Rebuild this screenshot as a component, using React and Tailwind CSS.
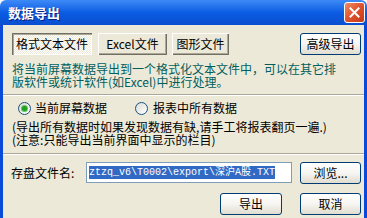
import React from "react";

const xpBtn =
  "flex items-center justify-center h-[22px] rounded-[3px] border border-[#003C74] bg-linear-to-b from-white via-[#F6F5F1] to-[#E0DDD0] text-[12px] text-black";

const classicUp =
  "flex items-center justify-center h-[22px] bg-[#ECE9D8] text-[12px] text-black shadow-[inset_1px_1px_#fff,inset_-1px_-1px_#716f64,inset_-2px_-2px_#aca899]";

const classicDown =
  "flex items-center justify-center h-[22px] bg-[repeating-conic-gradient(#fff_0_25%,#ECE9D8_0_50%)] bg-[length:2px_2px] text-[12px] text-black shadow-[inset_1px_1px_#716f64,inset_2px_2px_#aca899,inset_-1px_-1px_#fff]";

const Separator = ({ className }) => (
  <div className={className}>
    <div className="h-px bg-[#ACA899]" />
    <div className="h-px bg-white" />
  </div>
);

const Radio = ({ checked }) => (
  <span className="relative flex items-center justify-center w-[13px] h-[13px] rounded-full border border-[#1C5180] bg-linear-to-br from-[#DCDBD5] to-white">
    {checked && (
      <span className="w-[5px] h-[5px] rounded-full bg-[#21A121] shadow-[0_0_0_1px_#5FC45F]" />
    )}
  </span>
);

const Line = ({ children }) => (
  <div className="h-[13px] text-[12px] leading-[13px] whitespace-nowrap">{children}</div>
);

export default function App() {
  return (
    <div className="w-[367px] h-[218px] flex flex-col overflow-hidden font-['Noto_Sans_CJK_SC',sans-serif] select-none">
      {/* title bar */}
      <div className="h-[25px] flex items-center justify-between pl-[8px] pr-[2px] rounded-t-[6px] bg-linear-to-b from-[#3D8AF7] via-[#0A5CE3] to-[#0A4ED0]">
        <span className="text-[13px] font-bold text-white leading-none [text-shadow:1px_1px_#0A1E80]">
          数据导出
        </span>
        <span className="relative w-[21px] h-[21px] rounded-[3px] border border-white bg-linear-to-br from-[#EE8A66] via-[#E0512C] to-[#C23A18] flex items-center justify-center">
          <svg width="11" height="11" viewBox="0 0 11 11">
            <path d="M1.5 1.5 L9.5 9.5 M9.5 1.5 L1.5 9.5" stroke="#fff" strokeWidth="2" strokeLinecap="square" />
          </svg>
        </span>
      </div>

      {/* body */}
      <div className="flex-1 flex flex-col bg-[#ECE9D8] border-x-[3px] border-[#0B4AD8]">
        <div className="mt-[8px] flex items-center pl-[9px] pr-[3px]">
          <div className={classicDown + " w-[80px]"}>格式文本文件</div>
          <div className={classicUp + " w-[69px] ml-[6px]"}>Excel文件</div>
          <div className={classicUp + " w-[57px] ml-[5px]"}>图形文件</div>
          <div className={xpBtn + " w-[61px] ml-auto"}>高级导出</div>
        </div>

        <div className="mt-[7px] pl-[9px] text-[#005E5E]">
          <Line>将当前屏幕数据导出到一个格式化文本文件中，可以在其它排</Line>
          <Line>版软件或统计软件(如Excel)中进行处理。</Line>
        </div>

        <Separator className="mt-[6px]" />

        <div className="mt-[5px] h-[14px] flex items-center pl-[15px] text-[12px] text-black">
          <Radio checked />
          <span className="ml-[4px]">当前屏幕数据</span>
          <span className="ml-[28px]">
            <Radio />
          </span>
          <span className="ml-[5px]">报表中所有数据</span>
        </div>

        <div className="mt-[5px] pl-[9px] text-black">
          <Line>(导出所有数据时如果发现数据有缺,请手工将报表翻页一遍.)</Line>
          <Line>(注意:只能导出当前界面中显示的栏目)</Line>
        </div>

        <Separator className="mt-[7px]" />

        <div className="mt-[7px] h-[21px] flex items-center pl-[8px] pr-[3px]">
          <span className="text-[12px] text-black w-[75px]">存盘文件名:</span>
          <div className="w-[206px] h-[21px] border border-[#7F9DB9] bg-white flex items-center pl-[2px] overflow-hidden">
            <span className="bg-[#316AC5] text-white text-[10px] leading-[13px] whitespace-nowrap font-['Liberation_Mono','Noto_Sans_CJK_SC',monospace]">
              ztzq_v6\T0002\export\深沪A股.TXT
            </span>
          </div>
          <div className={xpBtn + " w-[61px] ml-auto"}>浏览...</div>
        </div>

        <div className="mt-[10px] flex items-center justify-end pr-[3px]">
          <div className={xpBtn + " w-[62px]"}>导出</div>
          <div className={xpBtn + " w-[61px] ml-[18px]"}>取消</div>
        </div>
      </div>
    </div>
  );
}
